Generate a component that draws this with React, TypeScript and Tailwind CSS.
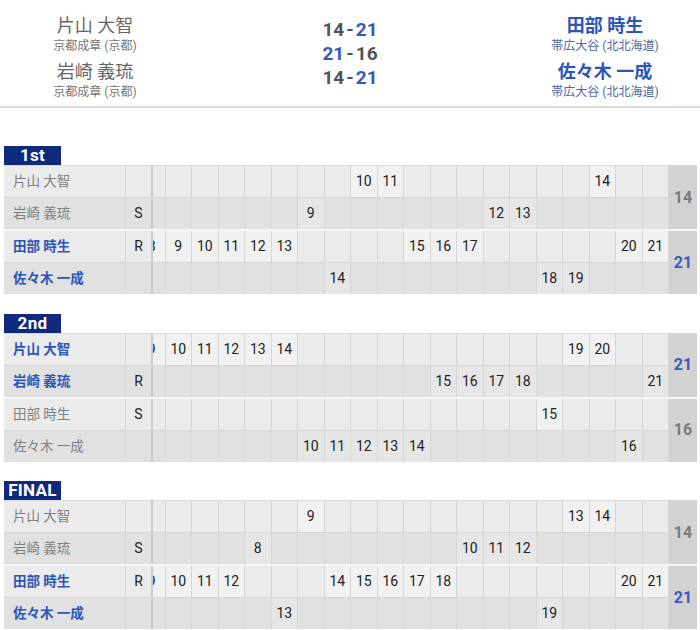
import React from 'react';

type Player = {
  name: string;
  serve: string;
  cells: Record<number, number>;
  win: boolean;
};

type Game = {
  label: string;
  rows: Player[];
  scores: [number, number];
};

// column -1 is the half-hidden column at the left edge of the scroll area
const games: Game[] = [
  {
    label: '1st',
    scores: [14, 21],
    rows: [
      { name: '片山 大智', serve: '', win: false, cells: { 7: 10, 8: 11, 16: 14 } },
      { name: '岩崎 義琉', serve: 'S', win: false, cells: { 5: 9, 12: 12, 13: 13 } },
      {
        name: '田部 時生',
        serve: 'R',
        win: true,
        cells: { [-1]: 8, 0: 9, 1: 10, 2: 11, 3: 12, 4: 13, 9: 15, 10: 16, 11: 17, 17: 20, 18: 21 },
      },
      { name: '佐々木 一成', serve: '', win: true, cells: { 6: 14, 14: 18, 15: 19 } },
    ],
  },
  {
    label: '2nd',
    scores: [21, 16],
    rows: [
      {
        name: '片山 大智',
        serve: '',
        win: true,
        cells: { [-1]: 9, 0: 10, 1: 11, 2: 12, 3: 13, 4: 14, 15: 19, 16: 20 },
      },
      { name: '岩崎 義琉', serve: 'R', win: true, cells: { 10: 15, 11: 16, 12: 17, 13: 18, 18: 21 } },
      { name: '田部 時生', serve: 'S', win: false, cells: { 14: 15 } },
      { name: '佐々木 一成', serve: '', win: false, cells: { 5: 10, 6: 11, 7: 12, 8: 13, 9: 14, 17: 16 } },
    ],
  },
  {
    label: 'FINAL',
    scores: [14, 21],
    rows: [
      { name: '片山 大智', serve: '', win: false, cells: { 5: 9, 15: 13, 16: 14 } },
      { name: '岩崎 義琉', serve: 'S', win: false, cells: { 3: 8, 11: 10, 12: 11, 13: 12 } },
      {
        name: '田部 時生',
        serve: 'R',
        win: true,
        cells: { [-1]: 9, 0: 10, 1: 11, 2: 12, 6: 14, 7: 15, 8: 16, 9: 17, 10: 18, 17: 20, 18: 21 },
      },
      { name: '佐々木 一成', serve: '', win: true, cells: { 4: 13, 14: 19 } },
    ],
  },
];

const cols = Array.from({ length: 20 }, (_, i) => i - 1);

const Row: React.FC<{ p: Player; odd: boolean; last: boolean }> = ({ p, odd, last }) => {
  const bg = odd ? 'bg-[#ebebeb]' : 'bg-[#e1e1e1]';
  return (
    <div className={`flex h-[31px] ${bg} ${last ? '' : 'box-content border-b border-[#d7d7d7]'}`}>
      <div
        className={`w-[122px] shrink-0 border-r border-[#d6d6d6] pl-[9px] flex items-center text-[13.5px] ${
          p.win ? 'text-[#2d55b8] font-bold' : 'text-[#808080]'
        }`}
      >
        {p.name}
      </div>
      <div className="w-[27px] shrink-0 border-r-2 border-[#cbcbcb] flex items-center justify-center text-[14px] text-[#222]">
        {p.serve}
      </div>
      <div className="flex-1 overflow-hidden">
        <div className="flex h-full ml-[-14px]">
          {cols.map((c) => {
            const v = p.cells[c];
            const cellBg = v === undefined ? '' : odd ? 'bg-[#f1f1f1]' : 'bg-[#e6e6e6]';
            return (
              <div
                key={c}
                className={`w-[26.5px] shrink-0 border-r border-[#d6d6d6] flex items-center justify-center text-[14px] text-[#222] ${cellBg}`}
              >
                {v}
              </div>
            );
          })}
        </div>
      </div>
    </div>
  );
};

const Pair: React.FC<{ a: Player; b: Player; score: number; top: boolean }> = ({ a, b, score, top }) => {
  const win = a.win;
  return (
    <div className={`flex ${top ? '' : 'border-t-2 border-[#f6f6f6]'}`}>
      <div className="flex-1 flex flex-col">
        <Row p={a} odd={true} last={false} />
        <Row p={b} odd={false} last={true} />
      </div>
      <div
        className={`w-[28px] shrink-0 bg-[#d2d2d2] flex items-center justify-center text-[16px] font-bold ${
          win ? 'text-[#3a5bc4]' : 'text-[#7a7a7a]'
        }`}
      >
        {score}
      </div>
    </div>
  );
};

const GameTable: React.FC<{ g: Game; first: boolean }> = ({ g, first }) => (
  <section className={first ? 'mt-[38px]' : 'mt-[19.5px]'}>
    <div className="ml-[4px] w-[57px] h-[19px] bg-[#0f2a7c] text-white font-bold text-[17px] leading-[19px] text-center tracking-[0.3px]">
      {g.label}
    </div>
    <div className="ml-[4px] mr-[3px] border-t border-[#dadada]">
      <Pair a={g.rows[0]} b={g.rows[1]} score={g.scores[0]} top={true} />
      <Pair a={g.rows[2]} b={g.rows[3]} score={g.scores[1]} top={false} />
    </div>
  </section>
);

const Score: React.FC<{ l: number; r: number }> = ({ l, r }) => (
  <div className="flex justify-center leading-[24px]">
    <span className={`w-[34px] text-right ${l > r ? 'text-[#3457c0]' : 'text-[#555]'}`}>{l}</span>
    <span className="px-[2px] text-[#555]">-</span>
    <span className={`w-[34px] text-left ${r > l ? 'text-[#3457c0]' : 'text-[#555]'}`}>{r}</span>
  </div>
);

const App: React.FC = () => {
  return (
    <div className="min-h-screen bg-white font-[Roboto,'Noto_Sans_CJK_JP',sans-serif]">
      {/* 試合ヘッダー */}
      <header className="grid grid-cols-[190px_1fr_190px] h-[108px] border-b-2 border-[#dddddd]">
        <div className="pt-[14px] flex flex-col items-center">
          <div className="text-[18px] leading-[24px] text-[#666]">片山 大智</div>
          <div className="text-[12px] leading-[16px] text-[#777]">京都成章 (京都)</div>
          <div className="mt-[6px] text-[18px] leading-[24px] text-[#666]">岩崎 義琉</div>
          <div className="text-[12px] leading-[16px] text-[#777]">京都成章 (京都)</div>
        </div>
        <div className="pt-[18px] text-[19px] font-bold">
          <Score l={14} r={21} />
          <Score l={21} r={16} />
          <Score l={14} r={21} />
        </div>
        <div className="pt-[14px] flex flex-col items-center">
          <div className="text-[18px] leading-[24px] font-bold text-[#2d55b8]">田部 時生</div>
          <div className="text-[12px] leading-[16px] text-[#5268a3]">帯広大谷 (北北海道)</div>
          <div className="mt-[6px] text-[18px] leading-[24px] font-bold text-[#2d55b8]">佐々木 一成</div>
          <div className="text-[12px] leading-[16px] text-[#5268a3]">帯広大谷 (北北海道)</div>
        </div>
      </header>

      {games.map((g, i) => (
        <GameTable key={g.label} g={g} first={i === 0} />
      ))}
    </div>
  );
};

export default App;
